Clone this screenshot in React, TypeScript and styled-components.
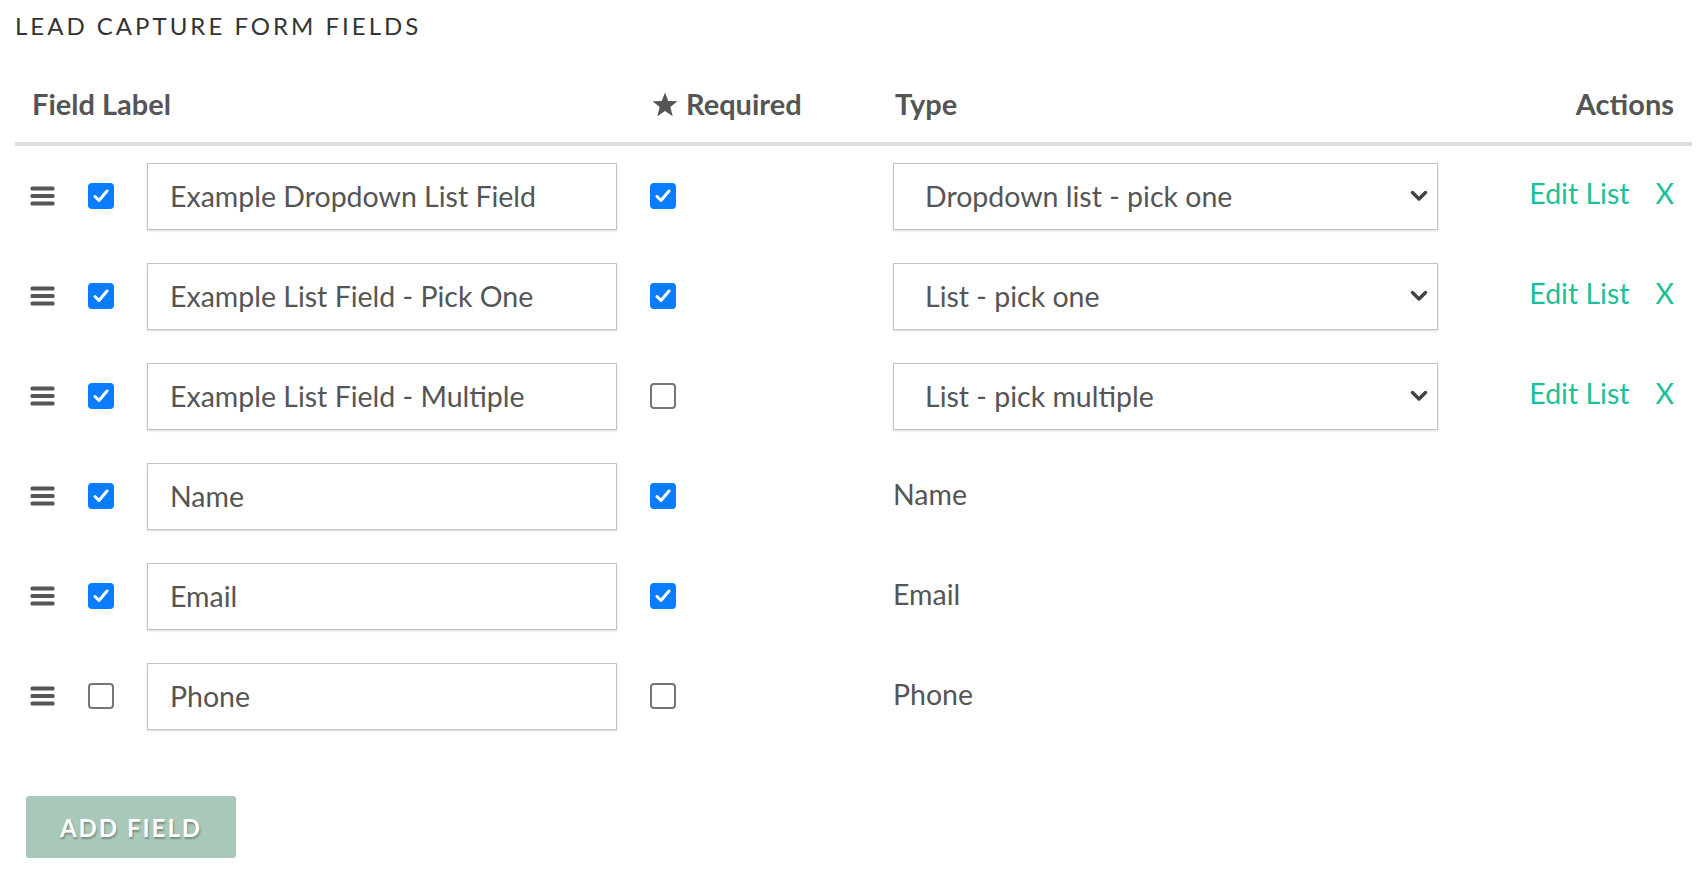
import React, { useState } from "react";
import styled, { createGlobalStyle } from "styled-components";

const GlobalStyle = createGlobalStyle`
  body {
    margin: 0;
    background: #ffffff;
    font-family: Lato, "Open Sans", sans-serif;
    color: #555555;
  }
`;

const Page = styled.div`
  padding: 10px 16px 0 15px;
`;

const Title = styled.h2`
  margin: 0;
  font-size: 24px;
  font-weight: 400;
  line-height: 32px;
  letter-spacing: 3px;
  color: #333333;
`;

const Grid = styled.div`
  display: grid;
  grid-template-columns: 58px 59px 503px 243px 545px 1fr;
  align-items: center;
`;

const HeaderRow = styled(Grid)`
  padding: 42px 18px 18px 17px;
  border-bottom: 4px solid #dedede;
  font-size: 29px;
  font-weight: 700;
  line-height: 40px;
  color: #555555;
`;

const HeadCell = styled.div<{ $span?: number; $right?: boolean }>`
  grid-column: ${(p) => (p.$span ? `span ${p.$span}` : "auto")};
  display: flex;
  align-items: center;
  gap: 8px;
  justify-content: ${(p) => (p.$right ? "flex-end" : "flex-start")};
`;

const Row = styled(Grid)`
  height: 100px;
  padding: 0 18px 0 15px;
`;

const Handle = styled.div`
  display: flex;
  cursor: grab;
`;

const CheckBox = styled.span<{ $checked: boolean }>`
  box-sizing: border-box;
  width: 26px;
  height: 26px;
  border-radius: 4px;
  display: flex;
  align-items: center;
  justify-content: center;
  cursor: pointer;
  background: ${(p) => (p.$checked ? "#0a7cff" : "#ffffff")};
  border: 2px solid ${(p) => (p.$checked ? "#0a7cff" : "#767676")};
`;

const TextInput = styled.input`
  box-sizing: border-box;
  width: 470px;
  height: 67px;
  padding: 0 22px;
  border: 1px solid #c4c4c4;
  box-shadow: 0 1px 2px rgba(0, 0, 0, 0.15);
  border-radius: 0;
  font-family: Lato, "Open Sans", sans-serif;
  font-size: 28.5px;
  color: #555555;
  outline: none;
`;

const SelectWrap = styled.div`
  position: relative;
  width: 545px;
`;

const Select = styled.select`
  box-sizing: border-box;
  width: 100%;
  height: 67px;
  padding: 0 60px 0 31px;
  border: 1px solid #c4c4c4;
  box-shadow: 0 1px 2px rgba(0, 0, 0, 0.15);
  border-radius: 0;
  background: #ffffff;
  appearance: none;
  font-family: Lato, "Open Sans", sans-serif;
  font-size: 28.5px;
  color: #555555;
  outline: none;
`;

const Chevron = styled.svg`
  position: absolute;
  right: 10px;
  top: 50%;
  transform: translateY(-50%);
  pointer-events: none;
`;

const TypeText = styled.div`
  font-size: 28.5px;
  color: #555555;
  padding-bottom: 4px;
`;

const Actions = styled.div`
  display: flex;
  justify-content: flex-end;
  align-items: center;
  gap: 26px;
  padding-bottom: 6px;
`;

const ActionLink = styled.a`
  font-size: 28.5px;
  color: #1dbf98;
  text-decoration: none;
  cursor: pointer;
`;

const AddButton = styled.button`
  margin: 50px 0 0 11px;
  width: 210px;
  height: 62px;
  border: none;
  border-radius: 3px;
  background: #a8c9b9;
  color: #ffffff;
  font-family: Lato, "Open Sans", sans-serif;
  font-size: 24px;
  font-weight: 700;
  letter-spacing: 2px;
  text-shadow: 1px 2px 2px rgba(0, 0, 0, 0.3);
  cursor: pointer;
`;

interface Field {
  label: string;
  enabled: boolean;
  required: boolean;
  type: string;
  options?: string[];
}

const listTypes = ["Dropdown list - pick one", "List - pick one", "List - pick multiple"];

const fields: Field[] = [
  { label: "Example Dropdown List Field", enabled: true, required: true, type: "Dropdown list - pick one", options: listTypes },
  { label: "Example List Field - Pick One", enabled: true, required: true, type: "List - pick one", options: listTypes },
  { label: "Example List Field - Multiple", enabled: true, required: false, type: "List - pick multiple", options: listTypes },
  { label: "Name", enabled: true, required: true, type: "Name" },
  { label: "Email", enabled: true, required: true, type: "Email" },
  { label: "Phone", enabled: false, required: false, type: "Phone" },
];

const HandleIcon = () => (
  <svg width="25" height="20" viewBox="0 0 25 20">
    <rect x="0.5" y="0.5" width="24" height="4" rx="1.5" fill="#555" />
    <rect x="0.5" y="8" width="24" height="4" rx="1.5" fill="#555" />
    <rect x="0.5" y="15.5" width="24" height="4" rx="1.5" fill="#555" />
  </svg>
);

const CheckMark = () => (
  <svg width="16" height="14" viewBox="0 0 16 14">
    <path d="M2 7.5 L6 11.5 L14 2" fill="none" stroke="#fff" strokeWidth="3" strokeLinecap="round" strokeLinejoin="round" />
  </svg>
);

const Star = () => (
  <svg width="26" height="25" viewBox="0 0 24 23">
    <polygon points="12,0.5 15,8.2 23.5,8.6 16.9,13.9 19.1,22.3 12,17.5 4.9,22.3 7.1,13.9 0.5,8.6 9,8.2" fill="#555" />
  </svg>
);

const Check: React.FC<{ value: boolean; onToggle: () => void }> = ({ value, onToggle }) => (
  <CheckBox $checked={value} onClick={onToggle} role="checkbox" aria-checked={value}>
    {value && <CheckMark />}
  </CheckBox>
);

const App = (): JSX.Element => {
  const [rows, setRows] = useState(fields);

  const update = (i: number, patch: Partial<Field>) =>
    setRows((r) => r.map((f, j) => (j === i ? { ...f, ...patch } : f)));

  return (
    <Page>
      <GlobalStyle />
      <Title>LEAD CAPTURE FORM FIELDS</Title>
      <HeaderRow>
        <HeadCell $span={3}>Field Label</HeadCell>
        <HeadCell>
          <Star />
          Required
        </HeadCell>
        <HeadCell>Type</HeadCell>
        <HeadCell $right>Actions</HeadCell>
      </HeaderRow>
      {rows.map((f, i) => (
        <Row key={i}>
          <Handle>
            <HandleIcon />
          </Handle>
          <div>
            <Check value={f.enabled} onToggle={() => update(i, { enabled: !f.enabled })} />
          </div>
          <div>
            <TextInput value={f.label} onChange={(e) => update(i, { label: e.currentTarget.value })} />
          </div>
          <div>
            <Check value={f.required} onToggle={() => update(i, { required: !f.required })} />
          </div>
          {f.options ? (
            <SelectWrap>
              <Select value={f.type} onChange={(e) => update(i, { type: e.currentTarget.value })}>
                {f.options.map((o) => (
                  <option key={o}>{o}</option>
                ))}
              </Select>
              <Chevron width="18" height="12" viewBox="0 0 18 12">
                <path d="M2.5 2.5 L9 9 L15.5 2.5" fill="none" stroke="#444" strokeWidth="3.5" strokeLinecap="round" strokeLinejoin="round" />
              </Chevron>
            </SelectWrap>
          ) : (
            <TypeText>{f.type}</TypeText>
          )}
          <Actions>
            {f.options && (
              <>
                <ActionLink>Edit List</ActionLink>
                <ActionLink>X</ActionLink>
              </>
            )}
          </Actions>
        </Row>
      ))}
      <AddButton>ADD FIELD</AddButton>
    </Page>
  );
};

export default App;
